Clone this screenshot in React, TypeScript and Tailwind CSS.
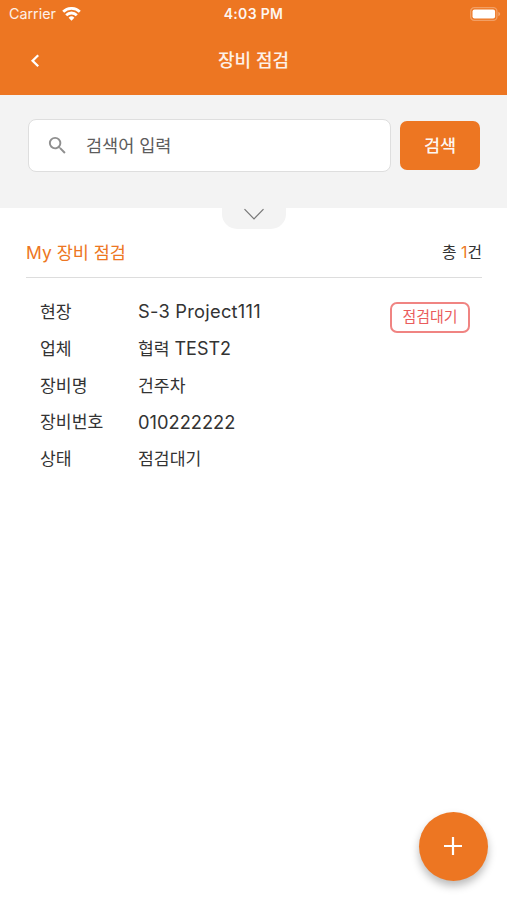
import React from 'react';

interface InfoRowProps {
  label: string;
  children: React.ReactNode;
}

const WifiIcon: React.FC = () => (
  <svg width="19" height="14" viewBox="0 0 19 14" fill="none" stroke="#fff" strokeWidth="2.8">
    <path d="M1.2 4.8a11.8 11.8 0 0 1 16.6 0" />
    <path d="M4.2 8.2a7.5 7.5 0 0 1 10.6 0" />
    <path d="M9.5 13.7l-2.9-2.9a4.1 4.1 0 0 1 5.8 0z" fill="#fff" stroke="none" />
  </svg>
);

const BatteryIcon: React.FC = () => (
  <svg width="31" height="14" viewBox="0 0 31 14">
    <rect x="0.7" y="0.7" width="26.2" height="12.6" rx="3.6" fill="none" stroke="#fff" strokeOpacity="0.3" strokeWidth="1.3" />
    <rect x="2.5" y="2.4" width="22.6" height="9.2" rx="2" fill="#fff" />
    <path d="M28.3 4.7c1.2.5 1.8 1.3 1.8 2.3s-.6 1.8-1.8 2.3z" fill="#fff" fillOpacity="0.35" />
  </svg>
);

const SearchIcon: React.FC = () => (
  <svg width="23" height="23" viewBox="0 0 24 24" fill="#8f8f8f">
    <path d="M15.5 14h-.79l-.28-.27A6.47 6.47 0 0 0 16 9.5 6.5 6.5 0 1 0 9.5 16c1.61 0 3.09-.59 4.23-1.57l.27.28v.79l5 4.99L20.49 19l-4.99-5zm-6 0C7.01 14 5 11.99 5 9.5S7.01 5 9.5 5 14 7.01 14 9.5 11.99 14 9.5 14z" />
  </svg>
);

const InfoRow: React.FC<InfoRowProps> = ({ label, children }) => (
  <div className="flex h-[36.8px] items-center">
    <dt className="w-[98px]">{label}</dt>
    <dd>{children}</dd>
  </div>
);

export default function App() {
  return (
    <div className="relative flex h-[900px] w-full flex-col overflow-hidden bg-white font-['Inter','Noto_Sans_CJK_KR',sans-serif] text-[17.2px] leading-[24px] text-[#333]">
      {/* Header */}
      <header className="h-[95px] shrink-0 bg-[#ed7622] text-white">
        <div className="grid h-[27px] grid-cols-3 items-center pl-[9px] pr-[6px] leading-[20px]">
          <div className="flex items-center gap-[6px]">
            <span className="text-[14.3px] text-white/90">Carrier</span>
            <WifiIcon />
          </div>
          <span className="pr-[3px] text-center text-[14px] font-semibold tracking-[0.3px] text-white/95">4:03 PM</span>
          <div className="flex justify-end">
            <BatteryIcon />
          </div>
        </div>
        <div className="grid h-[67px] grid-cols-[70px_1fr_70px] items-center">
          <button type="button" className="flex justify-center">
            <svg width="10" height="14" viewBox="0 0 10 14" fill="none" stroke="#fff" strokeWidth="2.3">
              <path d="M8.2 1.2L2.6 6.7l5.6 5.5" />
            </svg>
          </button>
          <h1 className="text-center text-[18px] font-medium text-white/90">장비 점검</h1>
        </div>
      </header>

      {/* Search */}
      <section className="relative flex h-[113px] shrink-0 items-start gap-[9px] bg-[#f3f3f3] pl-[28px] pr-[27px] pt-[24px]">
        <div className="flex h-[53px] flex-1 items-center rounded-[8px] border border-[#dedede] bg-white pl-[17px]">
          <SearchIcon />
          <span className="ml-[17px] text-[17.5px] text-[#5c5c5c]">검색어 입력</span>
        </div>
        <button type="button" className="mt-[2px] h-[49px] w-[80px] rounded-[7px] bg-[#ed7622] text-[17.5px] font-medium text-white/95">
          검색
        </button>
        <div className="absolute left-[222px] top-[113px] flex h-[21px] w-[64px] justify-center rounded-b-[15px] bg-[#f3f3f3]">
          <svg width="22" height="13" viewBox="0 0 22 13" fill="none" stroke="#777" strokeWidth="1.2">
            <path d="M1.5 1.2L11 10.8l9.5-9.6" />
          </svg>
        </div>
      </section>

      {/* List */}
      <main className="ml-[26px] mr-[25px] flex-1">
        <div className="flex h-[70px] items-center justify-between border-b border-[#ddd] pt-[20px]">
          <h2 className="text-[17.5px] text-[#ed7622]">My 장비 점검</h2>
          <span className="text-[15.8px]">
            총 <span className="text-[#ed7622]">1</span>건
          </span>
        </div>
        <div className="flex items-start justify-between pl-[14px] pr-[12px] pt-[15.6px]">
          <dl>
            <InfoRow label="현장"><span className="text-[18.3px] tracking-[0.25px]">S-3 Project111</span></InfoRow>
            <InfoRow label="업체">협력 <span className="text-[18px]">TEST2</span></InfoRow>
            <InfoRow label="장비명">건주차</InfoRow>
            <InfoRow label="장비번호"><span className="text-[18.3px]">010222222</span></InfoRow>
            <InfoRow label="상태">점검대기</InfoRow>
          </dl>
          <span className="mt-[8.4px] flex h-[31px] w-[80px] items-center justify-center rounded-[7px] border-2 border-[#f08482] text-[15px] text-[#ea5c5c]">
            점검대기
          </span>
        </div>
      </main>

      <button type="button" className="absolute left-[418.5px] top-[811.5px] flex size-[69px] items-center justify-center rounded-full bg-[#ed7622] shadow-[0_5px_8px_rgba(0,0,0,0.27)]">
        <svg width="18" height="18" viewBox="0 0 18 18" stroke="#fff" strokeWidth="2.2">
          <path d="M9 0v18M0 9h18" />
        </svg>
      </button>
    </div>
  );
}
